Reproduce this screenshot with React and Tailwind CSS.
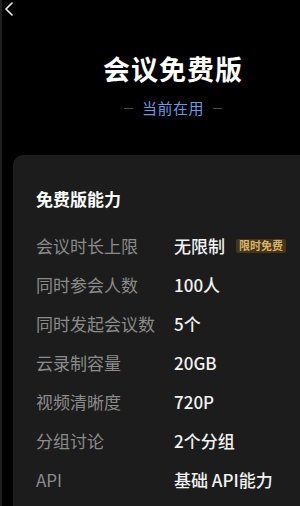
import React from 'react';

const features = [
  { label: '会议时长上限', value: '无限制', badge: '限时免费' },
  { label: '同时参会人数', value: '100人' },
  { label: '同时发起会议数', value: '5个' },
  { label: '云录制容量', value: '20GB' },
  { label: '视频清晰度', value: '720P' },
  { label: '分组讨论', value: '2个分组' },
  { label: 'API', value: '基础 API能力' },
];

const font = { fontFamily: '"Noto Sans CJK SC", "Noto Sans", sans-serif' };

export default function App() {
  return (
    <div
      className="w-[300px] h-[506px] overflow-hidden bg-black border-l-2 border-[#1f1f1f]"
      style={font}
    >
      <div className="w-[342px]">
        {/* Back button */}
        <div className="h-[18px] pl-[2px] pt-[2px]">
          <svg width="10" height="14" viewBox="0 0 10 14" fill="none">
            <path d="M8 1 L2 7 L8 13" stroke="#f2f2f2" strokeWidth="1.6" strokeLinecap="round" strokeLinejoin="round" />
          </svg>
        </div>

        {/* Title */}
        <div className="flex flex-col items-center">
          <h1 className="mt-[33px] text-[27px] leading-[36px] font-bold text-white tracking-[1px]">
            会议免费版
          </h1>
          <div className="mt-[11px] flex items-center gap-[9px] h-5">
            <span className="w-[9px] h-px bg-[#4a4a4a]" />
            <span className="text-[15px] leading-5 text-[#6d97e0] tracking-[0.5px]">当前在用</span>
            <span className="w-[9px] h-px bg-[#4a4a4a]" />
          </div>
        </div>

        {/* Card */}
        <div className="mt-[37px] ml-[11px] w-[320px] rounded-[10px] bg-[#1c1c1c] pt-[32px] pl-[23px] pb-6">
          <h2 className="text-[17px] leading-6 font-bold text-white">免费版能力</h2>
          <div className="mt-[15px]">
            {features.map((f) => (
              <div key={f.label} className="flex items-center h-[39px]">
                <span className="w-[138px] text-[17px] text-[#8b8b8b] whitespace-nowrap">{f.label}</span>
                <span className="text-[17px] font-medium text-[#f2f2f2] whitespace-nowrap">{f.value}</span>
                {f.badge && (
                  <span className="ml-[11px] px-[3px] h-[14px] flex items-center rounded-[2px] bg-[#44361a] text-[11px] leading-none font-bold text-[#d9b468]">
                    {f.badge}
                  </span>
                )}
              </div>
            ))}
          </div>
        </div>
      </div>
    </div>
  );
}
